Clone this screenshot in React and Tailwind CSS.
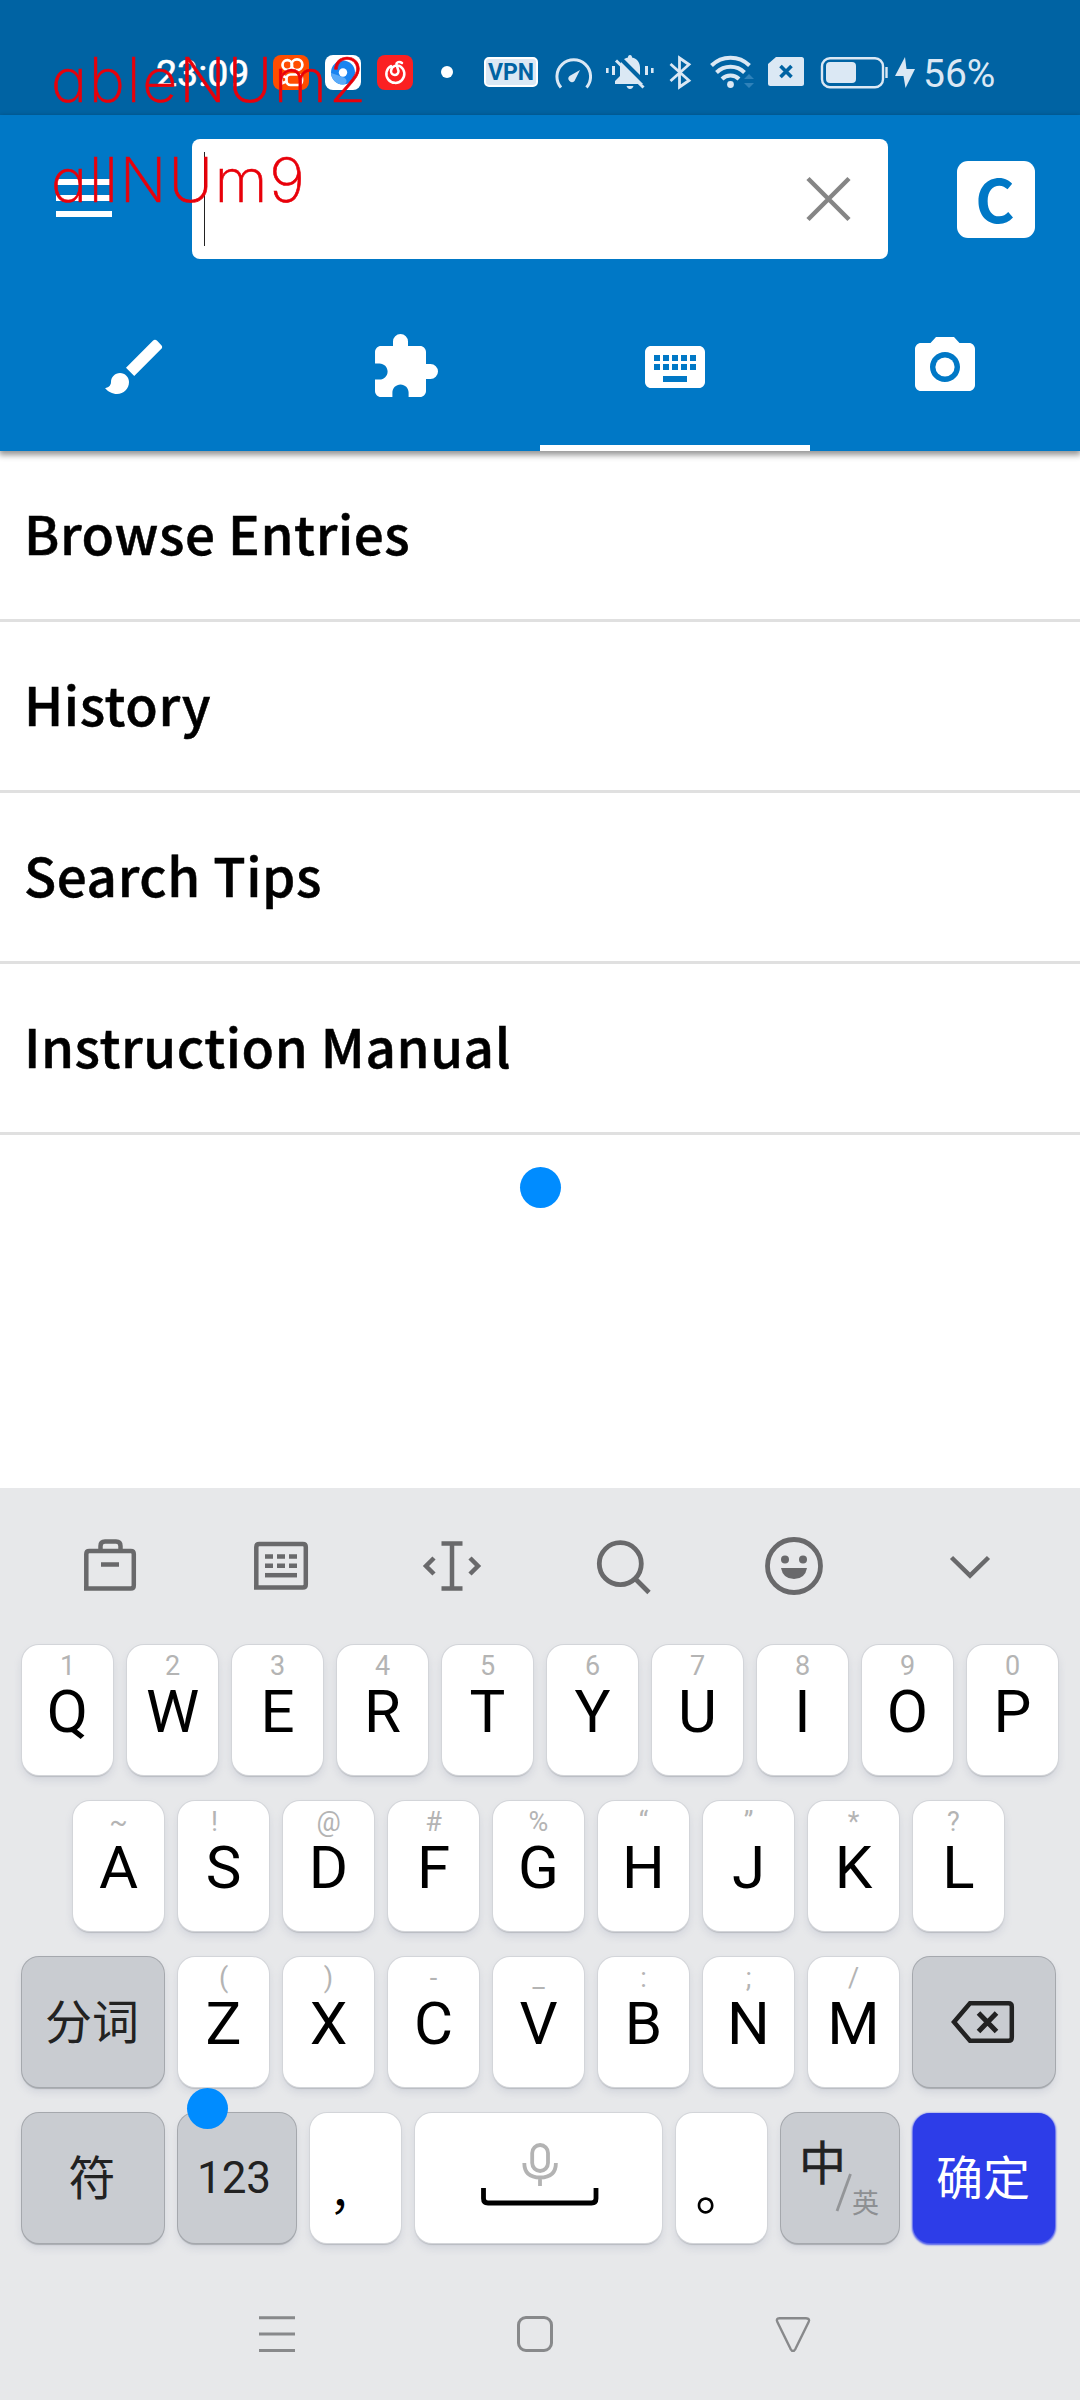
import React from "react";
import { MdBrush, MdExtension, MdKeyboard, MdCameraAlt } from "react-icons/md";

const CJK = "font-['Noto_Sans_CJK_SC',sans-serif]";

// Drawing cropped to a box given in page coordinates.
function Art({ box, className = "", children }) {
  const [x, y, w, h] = box;
  return (
    <svg viewBox={`${x} ${y} ${w} ${h}`} width={w} height={h} fill="none" className={`block shrink-0 ${className}`}>
      {children}
    </svg>
  );
}

function StatusBar() {
  return (
    <div className="flex h-[115px] items-start bg-[#0063a3] pt-[50px] text-[#dbe8f4]">
      <div className="ml-[156px] w-[117px] font-[Roboto,sans-serif] text-[37.5px] leading-[46px] text-white [-webkit-text-stroke:0.5px_#fff]">23:09</div>
      <Art box={[273, 50, 36, 46]}>
        <rect x="273" y="55" width="36" height="35" rx="8" fill="#ff4d00" />
        <g stroke="#fff" strokeWidth="2.7">
          <circle cx="287.300" cy="65" r="4.800" />
          <circle cx="297" cy="64.700" r="5.400" />
          <rect x="286.500" y="74.500" width="15.500" height="10.500" rx="4" />
          <path d="M286.500 77.500l-5-2v8l5-2" strokeLinejoin="round" />
        </g>
      </Art>
      <Art box={[325, 50, 36, 46]} className="ml-4">
        <rect x="325" y="55" width="36" height="35" rx="8" fill="#fff" />
        <circle cx="343" cy="72.500" r="12" fill="#1a84f0" />
        <path d="M331 73a12 12 0 0 0 12 11.500c4 0 5-5 1-7-5-2-9-3-13-4.500z" fill="#5aaaf8" />
        <circle cx="343" cy="72.500" r="4.200" fill="#fff" />
      </Art>
      <Art box={[377, 50, 36, 46]} className="ml-4">
        <rect x="377" y="55" width="36" height="35" rx="8" fill="#fb2022" />
        <path d="M391 66a9 9 0 1 0 9.500 .5c-3-2-9-1-9.500 4.500 0 5 7.500 5.500 7.500 0l-2-6c-.5-3 3-4 5.500-2" stroke="#fff" strokeWidth="2.500" strokeLinecap="round" />
      </Art>
      <Art box={[441, 50, 12, 46]} className="ml-7">
        <circle cx="447" cy="72" r="6" fill="#fff" />
      </Art>
      <div className="ml-[31px] mt-[7px] flex h-[30px] w-[54px] items-center justify-center rounded-[5px] border-2 border-white bg-[#dbe8f4] font-[Roboto,sans-serif] text-[23px] font-bold leading-none text-[#0063a3]">
        VPN
      </div>
      <Art box={[555, 50, 37, 46]} className="ml-[17px]">
        <path d="M561 87.500a16.800 16.800 0 1 1 25.500 0" stroke="currentColor" strokeWidth="3" />
        <path d="M580 70l-5.500 11a3.500 3.500 0 0 1-5-5z" fill="currentColor" />
      </Art>
      <Art box={[605, 50, 50, 46]} className="ml-[13px]">
        <g fill="currentColor">
          <rect x="606" y="68" width="2.600" height="5" />
          <rect x="612" y="66" width="3" height="9" />
          <rect x="645" y="66" width="3" height="9" />
          <rect x="651" y="68" width="2.600" height="5" />
          <path d="M630 55c1.500 0 2 1 2 2.500 5 1 8 5 8 10V76l4 5v3h-29v-3l5-5v-9c0-5 3-8.500 8-9.500 0-1.500.5-2.500 2-2.500z" />
          <path d="M626.500 86h7q-1 3-3.500 3t-3.500-3z" />
        </g>
        <path d="M620.500 58.500l27 27" stroke="#0063a3" strokeWidth="4" />
        <path d="M616 60.500l27.500 27" stroke="currentColor" strokeWidth="3" />
      </Art>
      <Art box={[668, 50, 24, 46]} className="ml-[13px]">
        <path d="M670.500 64l18.500 16.500-9.500 6.500V58l9.500 6.500L670.500 81" stroke="currentColor" strokeWidth="2.800" />
      </Art>
      <Art box={[709, 50, 46, 46]} className="ml-[17px]">
        <g stroke="currentColor" strokeWidth="4">
          <path d="M711.500 65.500a27 27 0 0 1 38 0" />
          <path d="M716.500 72.500a20 20 0 0 1 28 0" />
          <path d="M722 79a12 12 0 0 1 17 0" />
        </g>
        <circle cx="730.500" cy="84.500" r="3.400" fill="currentColor" />
        <path d="M744 79l5-5 5 5zM744 83l5 5 5-5z" fill="#2f82ba" />
      </Art>
      <Art box={[768, 50, 36, 46]} className="ml-[13px]">
        <path d="M776 57h25.500a2.500 2.500 0 0 1 2.500 2.500v24a2.500 2.500 0 0 1-2.500 2.500h-31a2.500 2.500 0 0 1-2.500-2.500V64z" fill="currentColor" />
        <path d="M780.500 66l11 11m0-11l-11 11" stroke="#0063a3" strokeWidth="3.600" />
      </Art>
      <Art box={[820, 50, 69, 46]} className="ml-4">
        <rect x="822" y="58.200" width="61" height="29" rx="8" stroke="currentColor" strokeWidth="2.400" />
        <rect x="826" y="62" width="30" height="21" rx="4" fill="currentColor" />
        <path d="M886.500 67v11" stroke="currentColor" strokeWidth="2.400" />
      </Art>
      <Art box={[894, 50, 22, 46]} className="ml-[5px]">
        <path d="M905 57l-10 19h8.500l2 12L915 69h-8.500z" fill="currentColor" />
      </Art>
      <div className="ml-[7px] font-[Roboto,sans-serif] text-[39px] leading-[49px]">56%</div>
    </div>
  );
}

const tabs = [MdBrush, MdExtension, MdKeyboard, MdCameraAlt];

function Header() {
  return (
    <header className="relative z-10 h-[336px] bg-[#0078c6] shadow-[0_3px_6px_1px_rgba(0,0,0,0.42)]">
      <div className="flex h-[168px] items-start pt-6">
        <div className="ml-14 mt-10 flex w-14 flex-col gap-[10px]">
          <div className="h-[6px] bg-white" />
          <div className="h-[6px] bg-white" />
          <div className="h-[6px] bg-white" />
        </div>
        <div className="ml-20 flex h-[120px] w-[696px] items-start justify-between rounded-lg bg-white">
          <div className="ml-3 mt-[13px] h-[94px] w-px bg-[#222]" />
          <Art box={[805, 175, 47, 47]} className="mr-9 mt-9">
            <path d="M808 178.500l41 41m0-41l-41 41" stroke="#858585" strokeWidth="4.500" />
          </Art>
        </div>
        <div className={`ml-[69px] mt-[22px] flex h-[77px] w-[78px] justify-center rounded-[11px] bg-white pr-[2px] text-[60px] font-bold leading-[71px] text-[#0078c6] ${CJK}`}>
          C
        </div>
      </div>
      <div className="grid h-[168px] grid-cols-4">
        {tabs.map((Icon, i) => (
          <div key={i} className={i === 2 ? "flex justify-center border-b-6 border-white pt-12" : "flex justify-center pt-12"}>
            <Icon size={72} color="#fff" />
          </div>
        ))}
      </div>
    </header>
  );
}

function List() {
  return (
    <main className="h-[1037px] bg-white">
      {["Browse Entries", "History", "Search Tips", "Instruction Manual"].map((t) => (
        <div key={t} className={`flex h-[171px] items-center border-b-3 border-[#e0e0e0] pb-[6px] pl-6 text-[53px] font-medium leading-none tracking-[0.58px] text-black [-webkit-text-stroke:0.5px_#000] ${CJK}`}>
          {t}
        </div>
      ))}
    </main>
  );
}

const LIGHT = "bg-white shadow-[0_0_0_1px_#d3d5d9,0_2px_1px_#b9bcc1,0_5px_8px_rgba(120,130,160,0.2)]";
const DARK = "bg-[#c9ccd1] text-[#222] shadow-[0_0_0_1px_#a5a8ad,0_2px_1px_#a9acb1,0_5px_8px_rgba(120,130,160,0.2)]";

function Key({ hint, label, shift = "" }) {
  return (
    <div className={`flex h-[130px] w-[91px] flex-col items-center rounded-[17px] font-[Roboto,sans-serif] text-black ${LIGHT}`}>
      <span className={`h-[42px] text-[27px] leading-[42px] text-[#b4b4b4] ${shift}`}>{hint}</span>
      <span className="text-[60px] leading-[49px]">{label}</span>
    </div>
  );
}

function keys(labels, hints, left = {}) {
  return labels.split("").map((l, i) => <Key key={l} label={l} hint={hints[i]} shift={left[l]} />);
}

function Toolbar() {
  return (
    <div className="flex h-[157px] items-start pt-[46px] text-[#69696b]">
      <Art box={[80, 1534, 60, 64]} className="ml-20">
        <g stroke="currentColor" strokeWidth="4.500">
          <path d="M86.300 1589V1554q0-3 3-3h41.500q3 0 3 3v31.500q0 3-3 3H84" />
          <path d="M100.500 1551v-5q0-4.500 4.500-4.500h11q4.500 0 4.500 4.500v5M101 1564.500h18" />
        </g>
      </Art>
      <Art box={[250, 1534, 62, 64]} className="ml-[110px]">
        <g stroke="currentColor" strokeWidth="4.500">
          <path d="M256.300 1588V1547q0-3 3-3h43.500q3 0 3 3v37.500q0 3-3 3H254" />
          <path d="M265 1556.500h32M265 1565.800h32" strokeDasharray="8 4" />
          <path d="M265 1575.200h32" />
        </g>
      </Art>
      <Art box={[420, 1534, 64, 64]} className="ml-[108px]">
        <path d="M441.500 1543.500h21M441.500 1588.500h21M452 1543v46M434 1558l-8 8 8 8M470 1558l8 8-8 8" stroke="currentColor" strokeWidth="4.500" />
      </Art>
      <Art box={[594, 1534, 60, 64]} className="ml-[110px]">
        <circle cx="620.300" cy="1563.700" r="21" stroke="currentColor" strokeWidth="4.800" />
        <path d="M635.500 1579l13.500 13.500" stroke="currentColor" strokeWidth="4.800" />
      </Art>
      <Art box={[762, 1534, 64, 64]} className="ml-[108px]">
        <circle cx="794" cy="1566" r="26.500" stroke="currentColor" strokeWidth="4.800" />
        <circle cx="785" cy="1559.500" r="4" fill="currentColor" />
        <circle cx="803" cy="1559.500" r="4" fill="currentColor" />
        <path d="M781 1568h26q-2 11-13 11t-13-11z" fill="currentColor" />
      </Art>
      <Art box={[946, 1534, 48, 64]} className="ml-[120px]">
        <path d="M951.500 1557.500l18.500 18 18.500-18" stroke="currentColor" strokeWidth="4.500" />
      </Art>
    </div>
  );
}

function Keyboard() {
  const wide = "flex h-[130px] w-[142px] items-center justify-center rounded-[17px]";
  const cjkText = `pb-[7px] pr-[2px] text-[47px] leading-none ${CJK}`;
  return (
    <section className="relative h-[912px] bg-[#e7e8ea]">
      <Toolbar />
      <div className="flex flex-col gap-[26px]">
        <div className="flex gap-[14px] pl-[22px]">{keys("QWERTYUIOP", "1234567890")}</div>
        <div className="flex gap-[14px] pl-[73px]">
          {keys("ASDFGHJKL", "~!@#%“”*?", { S: "-translate-x-[9px]", L: "-translate-x-[5px]" })}
        </div>
        <div className="flex gap-[14px] pl-[22px]">
          <div className={`${wide} ${DARK} ${cjkText}`}>分词</div>
          {keys("ZXCVBNM", "()-_:;/")}
          <div className={`${wide} ${DARK}`}>
            <Art box={[950, 1998, 68, 48]}>
              <path d="M954 2022l16-18.800h38.500q3.300 0 3.300 3.300v31q0 3.300-3.300 3.300H970z" stroke="currentColor" strokeWidth="4.500" />
              <path d="M978.500 2013l18 18.500m0-18.500l-18 18.500" stroke="currentColor" strokeWidth="5" />
            </Art>
          </div>
        </div>
        <div className="flex gap-[14px] pl-[22px]">
          <div className={`${wide} ${DARK} ${cjkText}`}>符</div>
          <div className={`flex h-[130px] w-[118px] items-center justify-center rounded-[17px] pb-px pr-[6px] font-[Roboto,sans-serif] text-[44px] leading-none ${DARK}`}>123</div>
          <div className={`flex h-[130px] w-[91px] items-center justify-center rounded-[17px] pr-[7px] pt-[22px] text-[46px] leading-none text-black ${CJK} ${LIGHT}`}>，</div>
          <div className={`flex h-[130px] w-[247px] justify-center rounded-[17px] ${LIGHT}`}>
            <Art box={[477, 2113, 124, 130]}>
              <g stroke="#b3b3b3" strokeWidth="3.800">
                <rect x="532.200" y="2145" width="15.800" height="26" rx="7.900" />
                <path d="M524.300 2163q0 14.500 15.800 14.500t15.800-14.500M540 2178v8" />
              </g>
              <path d="M483.500 2188v10.500q0 4.500 4.500 4.500h103.500q4.500 0 4.500-4.500V2188" stroke="#000" strokeWidth="4.800" />
            </Art>
          </div>
          <div className={`flex h-[130px] w-[91px] items-center justify-center rounded-[17px] pt-5 text-[52px] leading-none text-black ${CJK} ${LIGHT}`}>。</div>
          <div className={`flex h-[130px] w-[118px] items-start rounded-[17px] ${CJK} ${DARK}`}>
            <span className="ml-[18px] mt-[23px] text-[47px] leading-[47px] [-webkit-text-stroke:0.4px_#222]">中</span>
            <Art box={[834, 2170, 20, 44]} className="-ml-[12px] mt-[57px]">
              <path d="M850.500 2174l-13.500 37" stroke="#939598" strokeWidth="2.800" />
            </Art>
            <span className="-ml-[2px] mt-[75px] text-[27px] leading-[27px] text-[#8d8f92]">英</span>
          </div>
          <div className={`${wide} ${cjkText} bg-[#2d3de8] text-white shadow-[0_1px_2px_1px_#4a58ec]`}>确定</div>
        </div>
      </div>
      <div className="flex pl-[257px] pt-[71px]">
        <Art box={[257, 2314, 40, 40]}>
          <path d="M259 2317.700h36M259 2334h36M259 2350.500h36" stroke="#88898b" strokeWidth="3" />
        </Art>
        <Art box={[515, 2314, 40, 40]} className="ml-[218px]">
          <rect x="518.500" y="2317.500" width="33" height="33" rx="7.500" stroke="#88898b" strokeWidth="3" />
        </Art>
        <Art box={[773, 2314, 40, 40]} className="ml-[218px]">
          <path d="M779.500 2318.300h26.500q4.500 0 2.500 4l-13 26.500q-2.500 4.200-5 0l-13-26.500q-2-4 2-4z" stroke="#88898b" strokeWidth="2.400" />
        </Art>
      </div>
      <div className="absolute left-[187px] top-[600px] h-[41px] w-[41px] rounded-full bg-[#008cff]" />
    </section>
  );
}

export default function App() {
  const red = "absolute whitespace-nowrap font-[Inter,sans-serif] text-[61px] font-extralight leading-[60px] text-[#e8000a] [font-feature-settings:'cv11'] [-webkit-text-stroke:0.6px_#e8000a]";
  return (
    <div className="relative h-[2400px] w-[1080px] overflow-hidden bg-white">
      <StatusBar />
      <Header />
      <List />
      <Keyboard />
      <div className="absolute left-[520px] top-[1167px] h-[41px] w-[41px] rounded-full bg-[#008cff]" />
      <div className={`z-20 left-[51px] top-[50px] tracking-[1.8px] ${red}`}>ableNUm2</div>
      <div className={`z-20 left-[51px] top-[150px] tracking-[1.8px] ${red}`}>allNUm9</div>
    </div>
  );
}
